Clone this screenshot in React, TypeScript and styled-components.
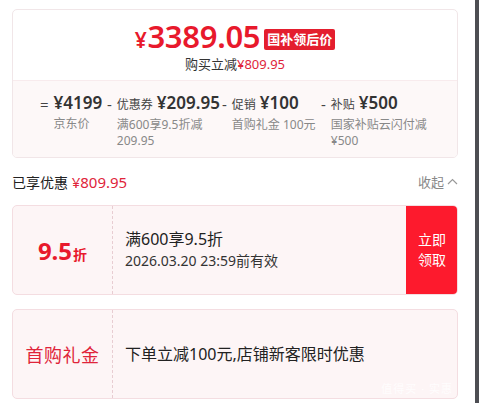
import styled, { createGlobalStyle } from "styled-components";

const GlobalStyle = createGlobalStyle`
  html, body {
    margin: 0;
    padding: 0;
    background: #fff;
  }
  body {
    font-family: "Noto Sans", "Noto Sans CJK SC", sans-serif;
    color: #333;
  }
`;

const Page = styled.div`
  display: flex;
  width: 479px;
  height: 403px;
  overflow: hidden;
`;

const Main = styled.div`
  width: 446px;
  padding: 9px 17px 0 12px;
  display: flex;
  flex-direction: column;
  & > * {
    flex-shrink: 0;
  }
`;

const EdgeBar = styled.div`
  width: 4px;
  background: #4d4e53;
`;

const PriceCard = styled.div`
  border: 1px solid #f1e6e8;
  border-radius: 5px;
  overflow: hidden;
`;

const PriceTop = styled.div`
  display: flex;
  flex-direction: column;
  align-items: center;
  padding: 11px 0 7px;
  height: 52px;
  box-sizing: content-box;
`;

const PriceLine = styled.div`
  display: flex;
  align-items: center;
  gap: 4px;
  height: 34px;
`;

const BigPrice = styled.span`
  color: #e8192c;
  font-weight: 600;
  font-size: 31px;
  letter-spacing: -0.3px;
  line-height: 34px;
  span {
    font-size: 21px;
    margin-right: 1px;
  }
`;

const Badge = styled.span`
  background: #e41e2e;
  color: #fff;
  font-size: 13px;
  font-weight: 700;
  border-radius: 2px;
  padding: 0 3px;
  height: 21px;
  line-height: 21px;
  margin-top: 2px;
`;

const Save = styled.div`
  font-size: 13px;
  color: #333;
  line-height: 18px;
  em {
    font-style: normal;
    color: #e0243a;
  }
`;

const Breakdown = styled.div`
  background: #fdf8f8;
  border-top: 1px solid #f8ebed;
  display: grid;
  grid-template-columns: 67px 115px 99px 1fr;
  padding: 10px 28px 0 27px;
  height: 66px;
`;

const Part = styled.div`
  display: grid;
  grid-template-columns: auto 1fr;
  column-gap: 5px;
  align-content: start;
`;

const Op = styled.span`
  font-size: 15px;
  color: #444;
  line-height: 24px;
  padding-top: 1px;
`;

const PartHead = styled.div`
  display: flex;
  align-items: baseline;
  gap: 4px;
  line-height: 24px;
  white-space: nowrap;
`;

const PartName = styled.span`
  font-size: 12px;
  color: #444;
`;

const PartValue = styled.span`
  font-size: 17px;
  font-weight: 600;
  color: #333;
`;

const PartNote = styled.div`
  grid-column: 2;
  font-size: 12px;
  color: #888;
  line-height: 16px;
  max-width: 100px;
`;

const SummaryRow = styled.div`
  display: flex;
  justify-content: space-between;
  align-items: center;
  height: 47px;
`;

const SummaryText = styled.span`
  font-size: 14px;
  color: #222;
  em {
    font-style: normal;
    color: #e0243a;
    font-size: 15px;
  }
`;

const Collapse = styled.span`
  font-size: 13px;
  color: #888;
  display: flex;
  align-items: center;
  gap: 3px;
`;

const Coupon = styled.div`
  position: relative;
  display: flex;
  height: 90px;
  box-sizing: border-box;
  border: 1px solid #f4dde1;
  background: #fdf5f6;
  border-radius: 5px;
  overflow: hidden;
  margin-bottom: 14px;
`;

const CouponSide = styled.div`
  width: 99px;
  flex-shrink: 0;
  border-right: 1px dashed #e8cdd2;
  display: flex;
  align-items: center;
  justify-content: center;
`;

const Discount = styled.span`
  color: #e8192c;
  font-weight: 700;
  font-size: 24px;
  small {
    font-size: 14px;
    font-weight: 600;
    margin-left: 1px;
  }
`;

const GiftTitle = styled.span`
  color: #e0243a;
  font-size: 18px;
  letter-spacing: 0.5px;
`;

const CouponBody = styled.div`
  flex: 1;
  display: flex;
  flex-direction: column;
  justify-content: center;
  padding-left: 12px;
  gap: 1px;
`;

const CouponTitle = styled.div`
  font-size: 16px;
  color: #222;
  line-height: 21px;
`;

const CouponDate = styled.div`
  font-size: 14px;
  color: #333;
  line-height: 20px;
`;

const Claim = styled.button`
  width: 52px;
  flex-shrink: 0;
  border: none;
  margin: -1px -1px -1px 0;
  background: #fd1a2d;
  color: #fff;
  font-family: inherit;
  font-size: 14px;
  line-height: 20px;
  padding: 0 8px;
  border-radius: 0 5px 5px 0;
`;

const Watermark = styled.span`
  position: absolute;
  right: 4px;
  bottom: 2px;
  font-size: 11px;
  line-height: 14px;
  color: rgba(255, 255, 255, 0.85);
  letter-spacing: 1px;
`;

const parts = [
  { op: "=", name: "", value: "¥4199", note: "京东价" },
  { op: "-", name: "优惠券", value: "¥209.95", note: "满600享9.5折减 209.95" },
  { op: "-", name: "促销", value: "¥100", note: "首购礼金 100元" },
  { op: "-", name: "补贴", value: "¥500", note: "国家补贴云闪付减¥500" },
];

export default function App() {
  return (
    <Page>
      <GlobalStyle />
      <Main>
        <PriceCard>
          <PriceTop>
            <PriceLine>
              <BigPrice>
                <span>¥</span>3389.05
              </BigPrice>
              <Badge>国补领后价</Badge>
            </PriceLine>
            <Save>
              购买立减<em>¥809.95</em>
            </Save>
          </PriceTop>
          <Breakdown>
            {parts.map((p) => (
              <Part key={p.note}>
                <Op>{p.op}</Op>
                <PartHead>
                  {p.name && <PartName>{p.name}</PartName>}
                  <PartValue>{p.value}</PartValue>
                </PartHead>
                <PartNote>{p.note}</PartNote>
              </Part>
            ))}
          </Breakdown>
        </PriceCard>

        <SummaryRow>
          <SummaryText>
            已享优惠 <em>¥809.95</em>
          </SummaryText>
          <Collapse>
            收起
            <svg width="11" height="7" viewBox="0 0 11 7" fill="none">
              <path d="M1 6l4.5-4.5L10 6" stroke="#999" strokeWidth="1.2" />
            </svg>
          </Collapse>
        </SummaryRow>

        <Coupon>
          <CouponSide>
            <Discount>
              9.5<small>折</small>
            </Discount>
          </CouponSide>
          <CouponBody>
            <CouponTitle>满600享9.5折</CouponTitle>
            <CouponDate>2026.03.20 23:59前有效</CouponDate>
          </CouponBody>
          <Claim>立即领取</Claim>
        </Coupon>

        <Coupon>
          <CouponSide>
            <GiftTitle>首购礼金</GiftTitle>
          </CouponSide>
          <CouponBody>
            <CouponTitle>下单立减100元,店铺新客限时优惠</CouponTitle>
          </CouponBody>
          <Watermark>值得买 · 实惠</Watermark>
        </Coupon>
      </Main>
      <EdgeBar />
    </Page>
  );
}
